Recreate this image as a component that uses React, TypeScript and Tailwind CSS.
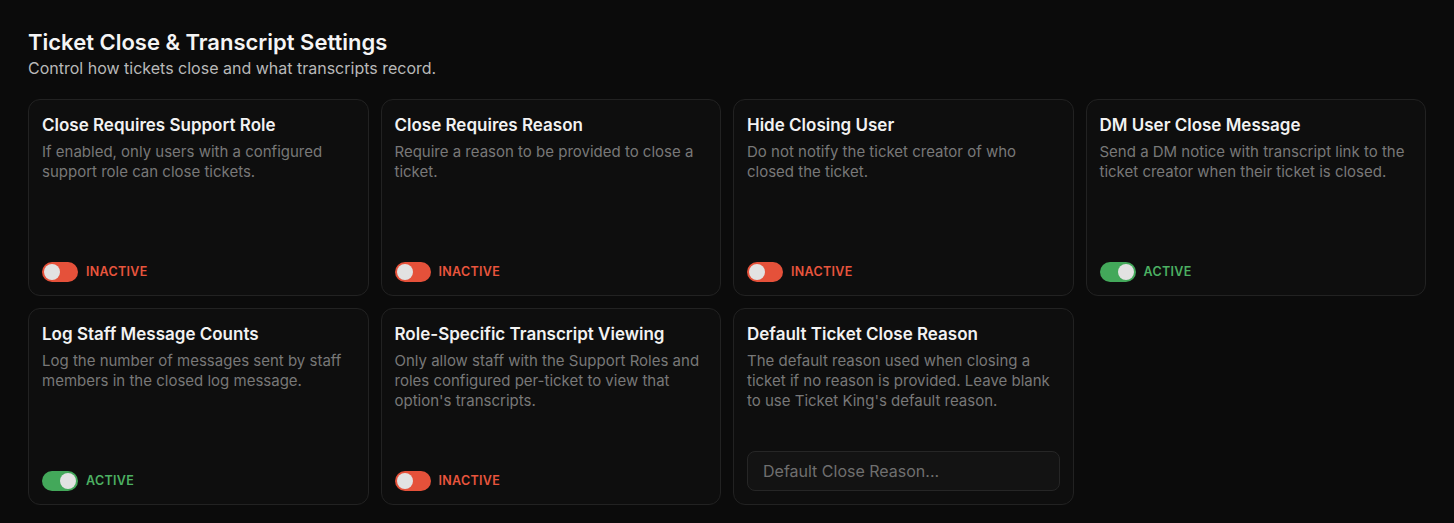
import { useState } from 'react';

type Setting = {
  id: string;
  title: string;
  description: string;
  enabled?: boolean;
  input?: string;
};

const settings: Setting[] = [
  {
    id: 'close-role',
    title: 'Close Requires Support Role',
    description: 'If enabled, only users with a configured support role can close tickets.',
    enabled: false,
  },
  {
    id: 'close-reason',
    title: 'Close Requires Reason',
    description: 'Require a reason to be provided to close a ticket.',
    enabled: false,
  },
  {
    id: 'hide-closer',
    title: 'Hide Closing User',
    description: 'Do not notify the ticket creator of who closed the ticket.',
    enabled: false,
  },
  {
    id: 'dm-close',
    title: 'DM User Close Message',
    description: 'Send a DM notice with transcript link to the ticket creator when their ticket is closed.',
    enabled: true,
  },
  {
    id: 'staff-counts',
    title: 'Log Staff Message Counts',
    description: 'Log the number of messages sent by staff members in the closed log message.',
    enabled: true,
  },
  {
    id: 'role-transcripts',
    title: 'Role-Specific Transcript Viewing',
    description:
      "Only allow staff with the Support Roles and roles configured per-ticket to view that option's transcripts.",
    enabled: false,
  },
  {
    id: 'default-reason',
    title: 'Default Ticket Close Reason',
    description:
      "The default reason used when closing a ticket if no reason is provided. Leave blank to use Ticket King's default reason.",
    input: 'Default Close Reason...',
  },
];

function Toggle({ on, onChange }: { on: boolean; onChange: () => void }) {
  return (
    <div className="flex h-5 items-center gap-2">
      <button
        type="button"
        onClick={onChange}
        className={`flex h-5 w-9 items-center rounded-full px-0.5 ${
          on ? 'justify-end bg-[#43a85a]' : 'justify-start bg-[#e5513a]'
        }`}
      >
        <span className="h-4 w-4 rounded-full bg-[#e2e2e2]" />
      </button>
      <span
        className={`text-[12.5px] font-semibold tracking-wide ${on ? 'text-[#4cb062]' : 'text-[#e8553d]'}`}
      >
        {on ? 'ACTIVE' : 'INACTIVE'}
      </span>
    </div>
  );
}

function SettingCard({ setting }: { setting: Setting }) {
  const [on, setOn] = useState(!!setting.enabled);
  return (
    <div className="flex h-[197px] flex-col rounded-xl border border-[#222222] bg-[#0e0e0e] px-[13px] pb-[13px] pt-[13px]">
      <h3 className="text-[17px] font-semibold leading-6 text-[#f2f2f2]">{setting.title}</h3>
      <p className="mt-[5px] text-[15px] leading-5 text-[#787878]">{setting.description}</p>
      <div className="mt-auto">
        {setting.input ? (
          <input
            placeholder={setting.input}
            className="h-10 w-full rounded-lg border border-[#262626] bg-[#131313] px-[15px] text-base text-[#dddddd] placeholder-[#6f6f6f] outline-none"
          />
        ) : (
          <Toggle on={on} onChange={() => setOn(!on)} />
        )}
      </div>
    </div>
  );
}

export default function App() {
  return (
    <div
      className="min-h-screen bg-[#0b0b0b] px-7 pt-7 pb-4"
      style={{ fontFamily: 'Inter, "Noto Sans", sans-serif' }}
    >
      <h1 className="text-[22px] font-semibold leading-7 text-[#f5f5f5]">
        Ticket Close &amp; Transcript Settings
      </h1>
      <p className="text-base leading-6 text-[#b9b9b9]">
        Control how tickets close and what transcripts record.
      </p>
      <div className="mt-[19px] grid grid-cols-4 gap-3">
        {settings.map((s) => (
          <SettingCard key={s.id} setting={s} />
        ))}
      </div>
    </div>
  );
}
